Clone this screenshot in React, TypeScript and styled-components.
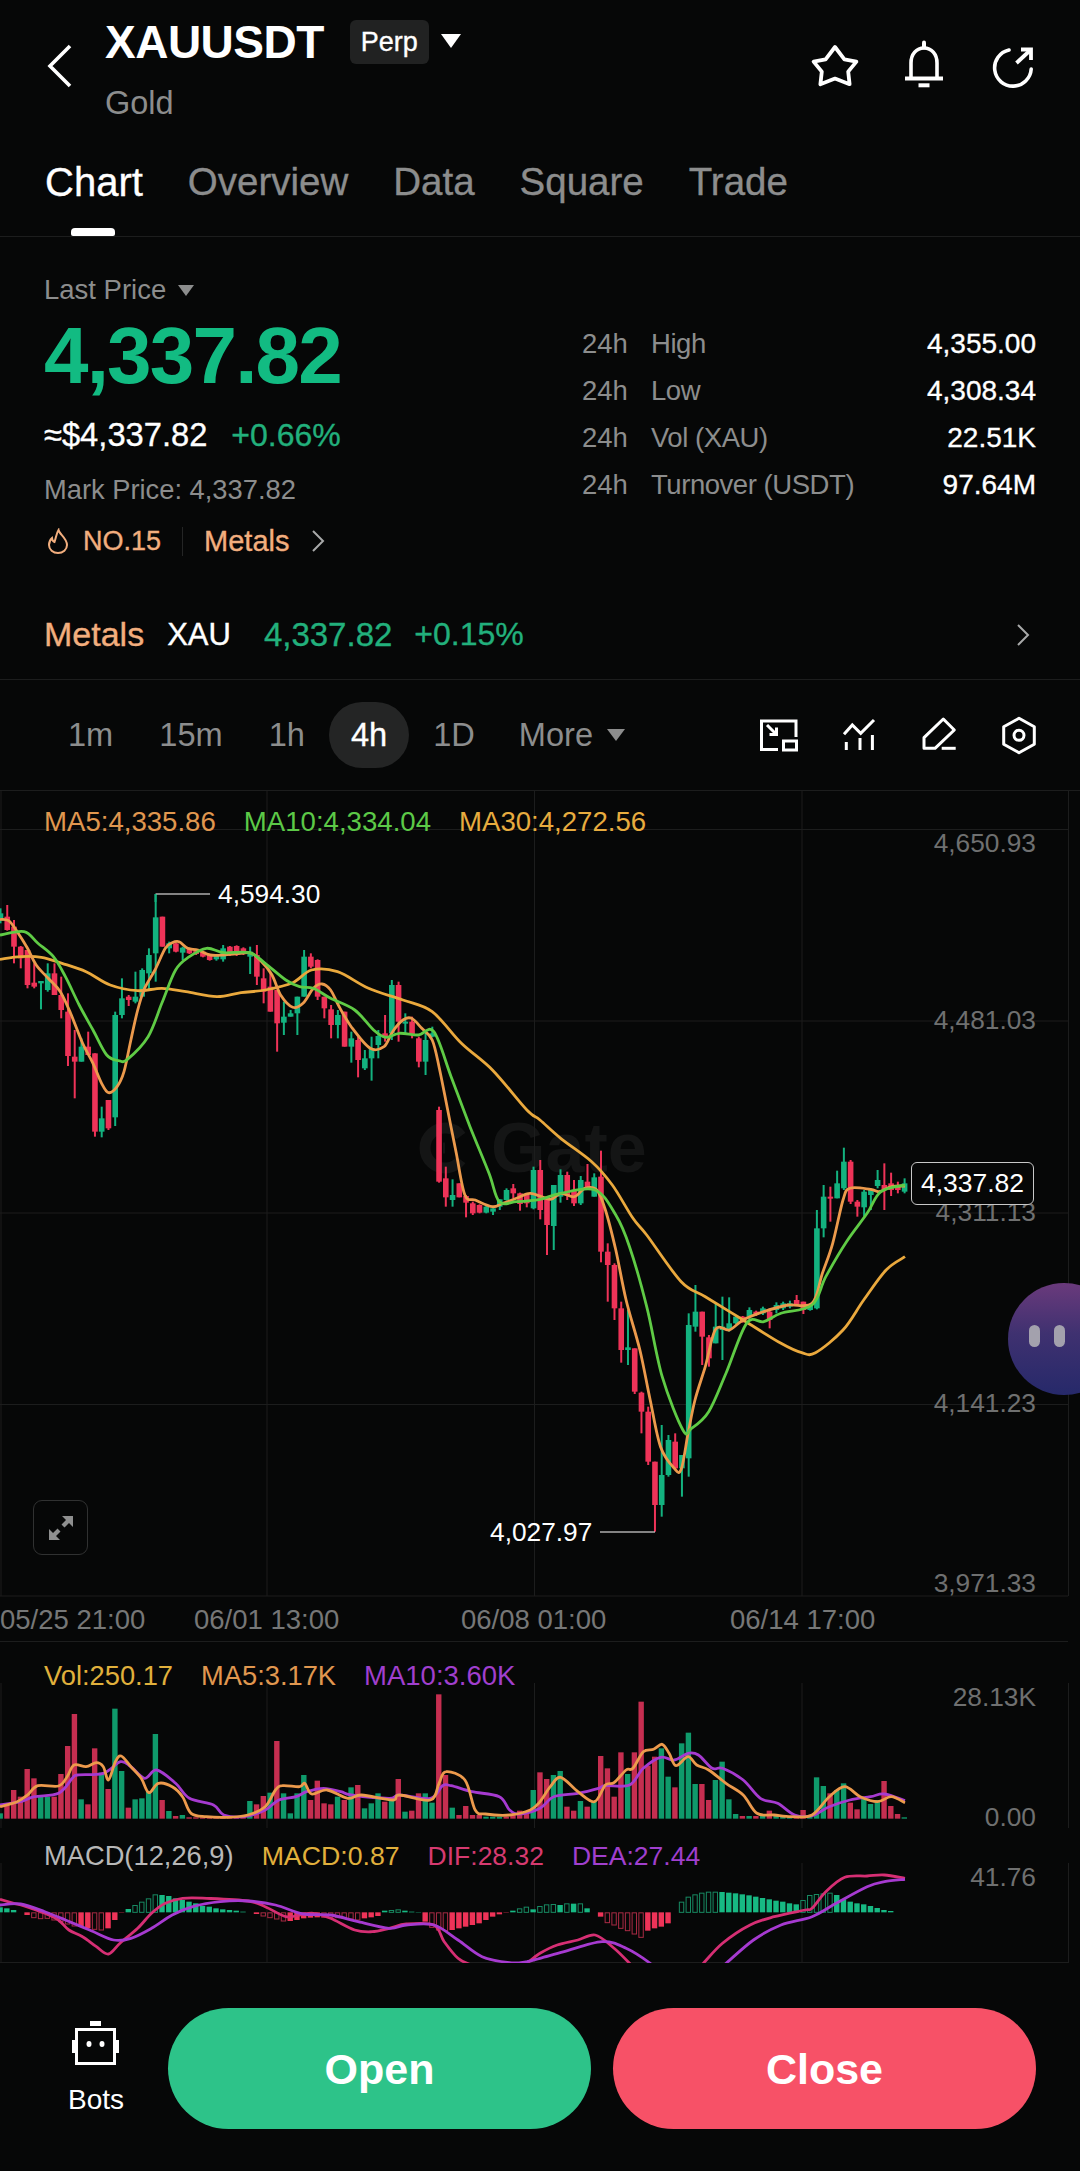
import React from "react";
import styled, { createGlobalStyle } from "styled-components";

const Global = createGlobalStyle`
  * { box-sizing: border-box; }
  html, body { margin: 0; padding: 0; background: #060707; }
  body { font-family: "Liberation Sans", Arial, sans-serif; color: #fff; }
`;

const GRAY = "#8c8d8d";
const ORANGE = "#f2ae7e";
const GREEN = "#22b07c";
const MEDIUM = "-webkit-text-stroke: 0.35px currentColor;";

const Page = styled.div`
  width: 1080px;
  height: 2171px;
  overflow: hidden;
  display: flex;
  flex-direction: column;
  position: relative;
  background: #060707;
`;

const Header = styled.header`
  height: 237px;
  border-bottom: 1px solid #1c1d1d;
`;
const TopBar = styled.div`
  height: 128px;
  display: flex;
  align-items: flex-start;
  padding: 0 39px 0 44px;
`;
const BackButton = styled.svg`
  width: 32px;
  height: 52px;
  margin-top: 40px;
  margin-right: 29px;
  flex: none;
`;
const TitleBlock = styled.div`
  flex: 1;
  padding-top: 20px;
`;
const TitleRow = styled.div`
  display: flex;
  align-items: center;
  height: 44px;
`;
const Symbol = styled.h1`
  margin: 0;
  font-size: 46px;
  line-height: 44px;
  font-weight: 700;
  letter-spacing: -0.5px;
`;
const Badge = styled.span`
  margin-left: 26px;
  width: 79px;
  height: 44px;
  border-radius: 6px;
  background: #212222;
  font-size: 27px;
  display: flex;
  align-items: center;
  justify-content: center;
  ${MEDIUM}
`;
const Caret = styled.span<{ $w: number; $h: number; $c: string }>`
  display: inline-block;
  width: 0;
  height: 0;
  border-left: ${(p) => p.$w / 2}px solid transparent;
  border-right: ${(p) => p.$w / 2}px solid transparent;
  border-top: ${(p) => p.$h}px solid ${(p) => p.$c};
`;
const TitleCaret = styled.span`
  margin-left: 12px;
  display: flex;
  margin-top: -2px;
`;
const SubTitle = styled.div`
  font-size: 32.5px;
  line-height: 36px;
  margin-top: 21px;
  color: ${GRAY};
`;
const TopActions = styled.div`
  display: flex;
  gap: 33px;
  padding-top: 37px;
`;
const TopIcon = styled.svg`
  width: 56px;
  height: 56px;
  display: block;
`;
const Tabs = styled.nav`
  height: 108px;
  display: flex;
  gap: 45px;
  padding-left: 45px;
`;
const Tab = styled.div<{ $on?: boolean }>`
  position: relative;
  font-size: ${(p) => (p.$on ? 40 : 38.5)}px;
  line-height: 108px;
  color: ${(p) => (p.$on ? "#fff" : GRAY)};
  ${MEDIUM}
  &::after {
    content: "";
    display: ${(p) => (p.$on ? "block" : "none")};
    position: absolute;
    left: 26px;
    bottom: 0;
    width: 44px;
    height: 8px;
    border-radius: 4px 4px 2px 2px;
    background: #fff;
  }
`;

const Summary = styled.section`
  height: 353px;
  display: flex;
  justify-content: space-between;
  padding: 0 44px;
`;
const PriceCol = styled.div`
  display: flex;
  flex-direction: column;
  padding-top: 35px;
`;
const LastRow = styled.div`
  display: flex;
  align-items: center;
  gap: 12px;
  height: 36px;
  font-size: 27.5px;
  color: ${GRAY};
`;
const BigPrice = styled.div`
  margin-top: 8px;
  height: 80px;
  font-size: 80px;
  line-height: 80px;
  font-weight: 700;
  letter-spacing: -1.8px;
  color: #12bb82;
`;
const UsdRow = styled.div`
  margin-top: 21px;
  height: 36px;
  display: flex;
  align-items: center;
  gap: 24px;
  font-size: 32px;
  ${MEDIUM}
`;
const UsdValue = styled.span`
  font-size: 32.7px;
`;
const Change = styled.span`
  color: ${GREEN};
`;
const MarkRow = styled.div`
  margin-top: 19px;
  height: 36px;
  line-height: 36px;
  font-size: 27.3px;
  color: ${GRAY};
`;
const RankRow = styled.div`
  margin-top: 15px;
  height: 36px;
  display: flex;
  align-items: center;
  color: ${ORANGE};
  ${MEDIUM}
`;
const Flame = styled.svg`
  width: 22px;
  height: 26px;
  margin-left: 3px;
  margin-right: 14px;
`;
const RankText = styled.span`
  font-size: 27px;
`;
const RankDivider = styled.span`
  width: 1px;
  height: 29px;
  background: #242525;
  margin: 0 21px;
`;
const RankLink = styled.span`
  font-size: 29px;
`;
const SmallChevron = styled.svg<{ $ml: number }>`
  width: 14px;
  height: 24px;
  margin-left: ${(p) => p.$ml}px;
  display: block;
`;
const StatsCol = styled.div`
  width: 454px;
  padding-top: 83px;
`;
const StatRow = styled.div`
  height: 47px;
  display: grid;
  grid-template-columns: 69px 1fr auto;
  align-items: center;
  font-size: 27.5px;
  color: ${GRAY};
`;
const StatLabel = styled.span`
  letter-spacing: -0.45px;
`;
const StatValue = styled.span`
  color: #fff;
  font-size: 28px;
  ${MEDIUM}
`;

const SectorRow = styled.section`
  height: 90px;
  border-bottom: 1px solid #1c1d1d;
  display: flex;
  align-items: center;
  padding: 0 50px 0 44px;
`;
const SectorName = styled.span`
  font-size: 34px;
  color: ${ORANGE};
  ${MEDIUM}
`;
const SectorCoin = styled.span`
  font-size: 31px;
  margin-left: 23px;
  ${MEDIUM}
`;
const SectorPrice = styled.span`
  font-size: 33px;
  margin-left: 33px;
  color: ${GREEN};
  ${MEDIUM}
`;
const SectorChange = styled.span`
  font-size: 32px;
  margin-left: 22px;
  flex: 1;
  color: ${GREEN};
  ${MEDIUM}
`;

const Toolbar = styled.section`
  height: 111px;
  border-bottom: 1px solid #1c1d1d;
  display: flex;
  align-items: center;
  justify-content: space-between;
  padding: 0 37px 0 46px;
`;
const Intervals = styled.div`
  display: flex;
  gap: 2px;
  align-items: center;
`;
const Interval = styled.div<{ $on?: boolean }>`
  height: 66px;
  padding: 0 22px;
  border-radius: 33px;
  display: flex;
  align-items: center;
  gap: 14px;
  font-size: 32.6px;
  color: ${(p) => (p.$on ? "#fff" : GRAY)};
  background: ${(p) => (p.$on ? "#242525" : "transparent")};
  ${(p) => (p.$on ? MEDIUM : "")}
`;
const MoreInterval = styled(Interval)`
  margin-left: -2px;
`;
const ToolIcons = styled.div`
  display: flex;
  gap: 32px;
`;
const ToolIcon = styled.svg`
  width: 48px;
  height: 48px;
  display: block;
`;

const ChartPane = styled.section`
  position: relative;
  height: 851px;
`;
const Canvas = styled.svg`
  position: relative;
  z-index: 1;
  display: block;
  width: 1080px;
  height: 100%;
`;
const Watermark = styled.div`
  position: absolute;
  left: 419px;
  top: 322px;
  display: flex;
  align-items: center;
  gap: 20px;
  font-size: 70px;
  line-height: 70px;
  font-weight: 700;
  color: #141515;
`;
const WatermarkLogo = styled.svg`
  width: 52px;
  height: 52px;
`;
const LegendRow = styled.div<{ $y: number }>`
  position: absolute;
  z-index: 2;
  left: 44px;
  top: ${(p) => p.$y}px;
  transform: translateY(-50%);
  display: flex;
  align-items: center;
  gap: 28px;
  line-height: 32px;
  white-space: nowrap;
`;
const LegendItem = styled.span<{ $c: string; $size: number }>`
  color: ${(p) => p.$c};
  font-size: ${(p) => p.$size}px;
`;
const AxisLabel = styled.span<{ $y: number }>`
  position: absolute;
  z-index: 2;
  right: 44px;
  top: ${(p) => p.$y}px;
  transform: translateY(-50%);
  font-size: 26.3px;
  line-height: 32px;
  color: #6f7070;
`;
const PriceTag = styled.span`
  position: absolute;
  z-index: 3;
  left: 911px;
  top: 371px;
  width: 123px;
  height: 43px;
  border: 1px solid #c8c8c8;
  border-radius: 6px;
  background: #060707;
  font-size: 26.5px;
  display: flex;
  align-items: center;
  justify-content: center;
`;
const ExtremeLabel = styled.span<{ $x: number; $y: number }>`
  position: absolute;
  z-index: 2;
  left: ${(p) => p.$x}px;
  top: ${(p) => p.$y}px;
  transform: translateY(-50%);
  font-size: 26.3px;
  line-height: 32px;
`;
const ExpandButton = styled.div`
  position: absolute;
  z-index: 2;
  left: 33px;
  top: 709px;
  width: 55px;
  height: 55px;
  border: 1.5px solid #303131;
  border-radius: 9px;
  display: flex;
  align-items: center;
  justify-content: center;
`;
const TimeLabel = styled.span<{ $x: number }>`
  position: absolute;
  z-index: 2;
  left: ${(p) => p.$x}px;
  top: 829px;
  transform: translateY(-50%);
  font-size: 27.5px;
  line-height: 32px;
  color: #767777;
`;
const Bubble = styled.div`
  position: absolute;
  z-index: 4;
  left: 1008px;
  top: 492px;
  width: 112px;
  height: 112px;
  border-radius: 50%;
  background: linear-gradient(180deg, #6a3a7c 0%, #3f3170 45%, #26296a 100%);
  display: flex;
  gap: 14px;
  padding: 42px 0 0 21px;
`;
const BubbleEye = styled.span`
  width: 11px;
  height: 22px;
  border-radius: 6px;
  background: #a3a1ad;
`;
const SubPane = styled.section<{ $h: number }>`
  position: relative;
  height: ${(p) => p.$h}px;
`;

const BottomBar = styled.footer`
  flex: 1;
  display: flex;
  align-items: flex-start;
  padding: 45px 44px 0 44px;
  gap: 20px;
`;
const BotsItem = styled.div`
  width: 104px;
  display: flex;
  flex-direction: column;
  align-items: center;
  padding-top: 8px;
`;
const BotsIcon = styled.svg`
  width: 56px;
  height: 56px;
  display: block;
`;
const BotsLabel = styled.span`
  font-size: 28px;
  line-height: 32px;
  margin-top: 12px;
`;
const Actions = styled.div`
  flex: 1;
  display: flex;
  gap: 22px;
`;
const ActionButton = styled.button<{ $c: string }>`
  flex: 1;
  height: 121px;
  padding: 2px 0 0;
  border: 0;
  border-radius: 60.5px;
  background: ${(p) => p.$c};
  color: #fff;
  font-family: inherit;
  font-size: 43px;
  font-weight: 700;
`;

/* ---------- chart data ---------- */
type Candle = [number, number, number, number, "r" | "g"];
const z4: Candle[] = [
  [340,362,325,370,"g"],[350,390,315,392,"r"],[380,440,360,490,"r"],[440,475,438,505,"r"],[450,555,450,565,"r"],
  [548,560,490,565,"r"],[543,550,543,628,"g"],[520,570,490,575,"g"],[520,585,490,585,"r"],[585,630,530,655,"r"],
  [635,768,580,798,"r"],[770,785,690,895,"r"],[740,785,715,785,"g"],[740,765,695,765,"r"],[760,995,760,1010,"r"],
  [955,995,920,1012,"g"],[900,985,900,990,"r"],[645,952,635,978,"g"],[595,645,535,655,"g"],[590,600,585,618,"r"],
  [590,605,515,610,"g"],[510,590,505,590,"g"],[465,520,445,570,"g"],[352,460,282,545,"g"],[350,440,350,440,"r"],
  [430,445,425,460,"g"],[430,455,428,457,"r"],[443,458,440,480,"g"],[445,460,443,462,"r"],[450,462,448,465,"r"],
  [455,470,452,472,"r"],[465,480,462,482,"r"],[465,478,462,482,"g"],[445,478,435,485,"g"],[440,465,438,468,"r"],
  [438,465,436,468,"r"],[445,462,442,465,"r"],[455,470,440,522,"g"],[465,530,435,555,"r"],[535,575,505,610,"r"],
  [560,635,515,635,"r"],[570,670,570,755,"r"],[650,668,605,705,"g"],[640,650,630,650,"g"],[590,640,590,705,"g"],
  [470,590,450,590,"g"],[470,500,460,505,"r"],[480,590,478,600,"r"],[590,625,590,655,"r"],[628,675,615,715,"r"],
  [645,675,630,715,"g"],[635,740,635,740,"r"],[715,740,695,788,"g"],[720,780,710,832,"r"],[775,805,750,810,"g"],
  [745,775,710,842,"g"],[708,735,690,775,"g"],[700,710,645,725,"r"],[555,700,540,720,"g"],[555,665,545,725,"r"],
  [665,670,640,700,"g"],[665,705,650,715,"r"],[715,785,710,802,"r"],[720,785,695,825,"g"],[700,710,680,712,"g"],
];
const z10: Candle[] = [
  [0,215,-10,218,"r"],[205,262,170,290,"r"],[255,270,208,290,"g"],[220,262,220,262,"r"],[258,278,255,322,"r"],
  [280,310,275,315,"r"],[285,308,283,310,"r"],[290,308,288,310,"g"],[295,305,295,315,"g"],[268,290,268,300,"g"],
  [240,270,235,272,"g"],[235,250,222,265,"r"],[250,282,248,302,"r"],[255,280,250,292,"r"],[180,295,170,298,"g"],
  [180,300,150,328,"r"],
];
const z5: Candle[] = [
  [290,375,290,465,"r"],[255,378,255,450,"g"],[225,290,208,308,"g"],[225,285,215,300,"r"],[270,310,240,318,"r"],
  [240,310,228,315,"g"],[245,270,192,270,"r"],[232,290,220,290,"g"],[230,455,152,487,"r"],[455,495,430,605,"r"],
  [495,625,490,660,"r"],[625,750,605,788,"r"],[742,750,630,795,"g"],[745,875,745,882,"r"],[878,935,875,1000,"r"],
  [935,1085,920,1095,"r"],[1085,1215,1085,1295,"r"],[1125,1215,975,1250,"g"],[1020,1125,1005,1130,"g"],[1025,1105,1000,1110,"r"],
  [1065,1105,1065,1190,"g"],[675,1075,640,1130,"g"],[635,680,555,695,"g"],[635,710,635,795,"r"],[712,775,705,800,"r"],
  [680,730,610,730,"g"],[680,690,590,780,"g"],[670,690,592,695,"g"],[650,670,648,672,"g"],[650,665,648,668,"r"],
  [630,650,622,660,"g"],[635,645,632,648,"r"],[625,640,620,645,"g"],[635,660,625,685,"r"],[615,630,607,640,"g"],
  [610,625,605,630,"g"],[610,620,602,625,"g"],[600,612,585,615,"r"],[605,630,605,642,"r"],[615,630,612,632,"g"],
  [385,625,330,628,"g"],[290,385,255,412,"g"],[290,295,260,365,"r"],[250,295,212,295,"g"],[185,265,143,270,"g"],
  [185,305,180,312,"r"],[305,320,300,350,"r"],[275,322,270,350,"g"],[270,285,265,330,"g"],[240,258,210,265,"g"],
  [255,268,190,330,"r"],[250,270,218,288,"r"],[255,270,245,280,"r"],[250,275,235,280,"g"],
];
const STEP = 6.747;
const CANDLE_RED = "#ee3358";
const CANDLE_GREEN = "#13b27f";
const candles = [
  ...z4.map((c) => ({ t: 800 + c[0] / 3, b: 800 + c[1] / 3, wt: 800 + c[2] / 3, wb: 800 + c[3] / 3, k: c[4] })),
  ...z10.map((c) => ({ t: 1110 + c[0] / 3, b: 1110 + c[1] / 3, wt: 1110 + c[2] / 3, wb: 1110 + c[3] / 3, k: c[4] })),
  ...z5.map((c) => ({ t: 1100 + c[0] / 3, b: 1100 + c[1] / 3, wt: 1100 + c[2] / 3, wb: 1100 + c[3] / 3, k: c[4] })),
];

type P = [number, number];
const smooth = (pts: P[]) => {
  let d = `M${pts[0][0].toFixed(1)} ${pts[0][1].toFixed(1)}`;
  for (let i = 0; i < pts.length - 1; i++) {
    const p0 = pts[Math.max(0, i - 1)];
    const p1 = pts[i];
    const p2 = pts[i + 1];
    const p3 = pts[Math.min(pts.length - 1, i + 2)];
    const c1x = p1[0] + (p2[0] - p0[0]) / 6;
    const c1y = p1[1] + (p2[1] - p0[1]) / 6;
    const c2x = p2[0] - (p3[0] - p1[0]) / 6;
    const c2y = p2[1] - (p3[1] - p1[1]) / 6;
    d += `C${c1x.toFixed(1)} ${c1y.toFixed(1)} ${c2x.toFixed(1)} ${c2y.toFixed(1)} ${p2[0].toFixed(1)} ${p2[1].toFixed(1)}`;
  }
  return d;
};
const map = (pts: number[][], x0: number, y0: number): P[] =>
  pts.map(([x, y]) => [x0 + x / 2.904, y0 + y / 3]);

const ma5 = smooth([
  ...map([[0,358],[25,362],[50,395],[80,445],[105,495],[140,535],[175,575],[205,640],[240,730],[270,790],[295,850],[315,878],[340,860],[360,815],[380,720],[400,630],[420,565],[450,510],[480,445],[500,428],[520,425],[545,445],[575,450],[610,465],[650,465],[700,460],[730,460],[760,485],[790,525],[815,585],[850,622],[880,610],[910,565],[935,552],[960,570],[985,620],[1020,680],[1075,745],[1115,740],[1140,695],[1170,660],[1195,655],[1225,685],[1255,720],[1275,800],[1300,930],[1325,1060],[1350,1185]], 0, 800),
  ...map([[1380,60],[1430,80],[1460,70],[1500,55],[1540,40]], 0, 1180),
  ...map([[30,298],[60,280],[100,290],[130,265],[165,270],[190,330],[220,450],[250,600],[290,750],[320,900],[350,1040],[390,1105],[410,1108],[430,1000],[450,900],[480,800],[510,688],[550,690],[590,660],[650,635],[720,615],[790,610],[820,520],[850,430],[880,300],[900,265],[960,268],[985,275],[1020,260],[1060,258]], 540, 1100),
]);
const ma10 = smooth([
  ...map([[0,405],[70,395],[110,430],[155,470],[190,530],[230,615],[270,690],[310,765],[345,782],[370,778],[430,710],[470,610],[510,510],[550,470],[600,445],[650,458],[725,458],[770,490],[830,540],[870,560],[910,565],[960,595],[1030,630],[1085,690],[1120,712],[1160,700],[1215,705],[1260,695],[1310,830],[1365,980],[1420,1120]], 0, 800),
  ...map([[1450,65],[1500,65]], 0, 1180),
  ...map([[0,298],[60,280],[160,270],[220,345],[260,440],[310,620],[355,830],[415,990],[440,985],[490,935],[540,820],[600,670],[650,665],[700,640],[790,615],[830,530],[890,425],[950,340],[990,275],[1060,255]], 540, 1100),
]);
const ma30 = smooth([
  ...map([[0,478],[60,470],[120,472],[180,490],[250,515],[320,555],[400,572],[470,565],[540,575],[630,590],[700,578],[770,570],[850,548],[905,510],[980,515],[1070,565],[1170,600],[1255,635],[1340,730],[1430,810],[1530,930]], 0, 800),
  ...map([[0,60],[60,115],[150,185],[210,255],[270,355],[310,405],[410,545],[480,590],[590,660],[700,730],[760,758],[800,758],[880,690],[940,600],[1005,510],[1060,470]], 540, 1100),
]);

const volTops = [
  580,555,510,530,447,475,525,530,530,462,378,282,538,553,385,458,507,266,453,563,538,535,515,342,540,573,588,585,592,592,592,592,592,592,592,592,590,543,553,528,518,363,520,580,520,465,540,482,550,553,530,540,502,495,565,550,520,545,540,477,575,572,520,520,548,223,465,563,585,558,585,585,590,590,590,590,585,572,578,510,
  457,477,465,453,560,572,543,560,545,408,445,530,397,462,397,245,437,410,385,470,502,370,338,492,492,540,480,425,538,582,588,588,588,588,572,585,588,590,590,570,585,472,498,520,510,490,548,568,535,552,540,483,558,582,592,
];
const greenVol = new Set([0,6,7,12,15,17,18,20,21,22,23,25,27,37,40,42,43,44,45,50,52,54,55,56,58,60,63,64,67,72,73,74,79,82,83,86,88,93,98,99,101,102,103,106,107,108,109,111,113,115,116,117,120,121,122,124,125,128,129,130,134]);

const volMa5 = smooth([
  ...map([[0,560],[50,545],[80,525],[110,497],[170,498],[195,470],[215,435],[250,440],[280,428],[300,440],[315,480],[335,425],[352,408],[380,440],[410,475],[432,518],[460,490],[500,500],[530,530],[555,580],[600,590],[660,592],[720,585],[770,560],[800,510],[820,497],[870,500],[885,490],[905,522],[950,510],[1010,535],[1050,525],[1140,540],[1160,525],[1250,540],[1275,490],[1295,455],[1350,480],[1380,570],[1410,582],[1480,585],[1540,570]], 0, 1620),
  ...map([[0,545],[30,500],[60,472],[110,515],[158,545],[190,495],[215,488],[250,450],[270,445],[300,395],[330,388],[355,373],[375,400],[395,437],[430,410],[455,435],[490,450],[540,490],[590,525],[630,580],[680,585],[730,590],[790,585],[840,530],[885,500],[930,530],[980,545],[1020,530],[1060,548]], 540, 1620),
]);
const volMa10 = smooth([
  ...map([[0,555],[60,545],[100,530],[170,520],[210,475],[225,465],[300,460],[350,425],[380,440],[420,475],[455,450],[510,490],[550,535],[620,555],[650,585],[710,590],[770,570],[810,540],[860,530],[890,515],[940,505],[990,515],[1020,525],[1130,535],[1160,525],[1250,535],[1285,497],[1310,497],[1370,515],[1450,530],[1480,570],[1510,582]], 0, 1620),
  ...map([[0,565],[40,530],[110,520],[170,505],[190,497],[260,495],[300,445],[350,412],[390,420],[430,400],[460,405],[500,445],[530,445],[590,480],[640,535],[690,550],[740,585],[790,587],[840,560],[900,540],[960,530],[1000,522],[1060,542]], 540, 1620),
]);

type Hist = number | [number];
const hist: Hist[] = [
  862,865,870,877,885,[893],[896],[895],[900],[905],[912],[918],920,925,[928],[930],925,900,878,
  867,[855],[845],[835],[823],825,828,835,840,845,850,858,860,865,868,870,872,875,877,
  882,[888],[893],[897],[903],903,900,895,893,892,[892],[892],[893],[895],[897],[900],895,892,888,
  872,[870],[868],872,875,876,905,[922],[930],[932],930,925,920,915,910,900,890,883,878,872,[865],
  [860],868,[858],[853],[852],855,[850],851,[850],865,877,890,[908],[915],[925],[932],[942],[952],932,925,920,910,877,
  [845],[830],[823],[818],[815],[815],816,818,820,823,826,830,834,838,842,845,850,853,[840],[825],[822],[820],[818],
  825,838,845,850,853,858,864,870,873,
];

const dif = smooth([
  ...map([[0,838],[40,850],[70,858],[130,880],[170,900],[200,930],[240,950],[280,980],[315,1002],[350,968],[400,925],[440,880],[480,850],[530,835],[600,835],[720,843],[770,860],[830,890],[870,885],[910,880],[960,895],[1030,930],[1080,935],[1130,925],[1180,912],[1260,915],[1290,965],[1330,1015],[1370,1035],[1440,1060],[1500,1050],[1530,1030]], 0, 1620),
  ...map([[0,1000],[50,975],[110,960],[160,945],[210,980],[260,1030],[310,1090],[420,1090],[470,1035],[530,970],[610,915],[680,890],[770,870],[790,865],[830,815],[885,772],[950,768],[1000,765],[1060,775]], 540, 1620),
]);
const dea = smooth([
  ...map([[0,855],[60,852],[130,875],[190,900],[260,930],[330,960],[380,955],[440,925],[500,885],[560,860],[640,845],[720,843],[800,855],[880,882],[960,885],[1040,905],[1130,925],[1180,915],[1260,915],[1330,960],[1400,1010],[1480,1028],[1530,1025]], 0, 1620),
  ...map([[0,1015],[70,995],[180,965],[250,985],[320,1030],[380,1085],[480,1085],[535,1035],[620,960],[700,915],[790,890],[860,850],[950,800],[1000,785],[1060,778]], 540, 1620),
]);

const GRID = "#1c1d1d";
const VX = [1, 267, 534.5, 802, 1068.5];

const stats = [
  ["High", "4,355.00"],
  ["Low", "4,308.34"],
  ["Vol (XAU)", "22.51K"],
  ["Turnover (USDT)", "97.64M"],
];

export default function App() {
  return (
    <Page>
      <Global />
      <Header>
        <TopBar>
          <BackButton viewBox="0 0 32 52" fill="none" stroke="#fff" strokeWidth="3.6">
            <path d="M26 6 6 26l20 20" />
          </BackButton>
          <TitleBlock>
            <TitleRow>
              <Symbol>XAUUSDT</Symbol>
              <Badge>Perp</Badge>
              <TitleCaret>
                <Caret $w={21} $h={14} $c="#fff" />
              </TitleCaret>
            </TitleRow>
            <SubTitle>Gold</SubTitle>
          </TitleBlock>
          <TopActions>
            <TopIcon viewBox="0 0 56 56" fill="none" stroke="#fff" strokeWidth="3.8" strokeLinejoin="round">
              <path d="M28 10l9.4 12.4 12 2.2-8.2 10 1.4 12.6L28 41.6 13.4 47.2l1.4-12.6-8.2-10 12-2.2z" />
            </TopIcon>
            <TopIcon viewBox="0 0 56 56" fill="none" stroke="#fff" strokeWidth="3.6">
              <path d="M15 41V26c0-9 5.5-15 13-15s13 6 13 15v15" />
              <path d="M9 41.5h38" strokeWidth="4" />
              <path d="M28 5.5v5" strokeWidth="4" strokeLinecap="round" />
              <path d="M22.5 48.3h11" strokeWidth="4" />
            </TopIcon>
            <TopIcon viewBox="0 0 56 56" fill="none" stroke="#fff" strokeWidth="3.6" strokeLinecap="round">
              <path d="M24 13A18.3 18.3 0 1 0 46.2 32" />
              <path d="M31.5 26 45.5 13" strokeLinecap="butt" strokeWidth="3.8" />
              <path d="M36 12.5h10v10.5" strokeLinecap="butt" strokeWidth="3.8" />
            </TopIcon>
          </TopActions>
        </TopBar>
        <Tabs>
          <Tab $on>Chart</Tab>
          <Tab>Overview</Tab>
          <Tab>Data</Tab>
          <Tab>Square</Tab>
          <Tab>Trade</Tab>
        </Tabs>
      </Header>

      <Summary>
        <PriceCol>
          <LastRow>
            Last Price
            <Caret $w={17} $h={11} $c={GRAY} />
          </LastRow>
          <BigPrice>4,337.82</BigPrice>
          <UsdRow>
            <UsdValue>≈$4,337.82</UsdValue>
            <Change>+0.66%</Change>
          </UsdRow>
          <MarkRow>Mark Price: 4,337.82</MarkRow>
          <RankRow>
            <Flame viewBox="0 0 22 26" fill="none" stroke={ORANGE} strokeWidth="2">
              <path d="M11.5 2c.6 4 8.5 8 8.5 15a9 8 0 0 1-18 0c0-3 1.2-5.4 3-7 .2 2 1 3.5 2.5 4C9 10 9.5 5 11.5 2z" />
            </Flame>
            <RankText>NO.15</RankText>
            <RankDivider />
            <RankLink>Metals</RankLink>
            <SmallChevron $ml={22} viewBox="0 0 14 24" fill="none" stroke="#a8a9a9" strokeWidth="2">
              <path d="M2 2l10 10L2 22" />
            </SmallChevron>
          </RankRow>
        </PriceCol>
        <StatsCol>
          {stats.map(([k, v]) => (
            <StatRow key={k}>
              <span>24h</span>
              <StatLabel>{k}</StatLabel>
              <StatValue>{v}</StatValue>
            </StatRow>
          ))}
        </StatsCol>
      </Summary>

      <SectorRow>
        <SectorName>Metals</SectorName>
        <SectorCoin>XAU</SectorCoin>
        <SectorPrice>4,337.82</SectorPrice>
        <SectorChange>+0.15%</SectorChange>
        <SmallChevron $ml={0} viewBox="0 0 14 24" fill="none" stroke="#a8a9a9" strokeWidth="2">
          <path d="M2 2l10 10L2 22" />
        </SmallChevron>
      </SectorRow>

      <Toolbar>
        <Intervals>
          <Interval>1m</Interval>
          <Interval>15m</Interval>
          <Interval>1h</Interval>
          <Interval $on>4h</Interval>
          <Interval>1D</Interval>
          <MoreInterval>
            More
            <Caret $w={18} $h={12} $c={GRAY} />
          </MoreInterval>
        </Intervals>
        <ToolIcons>
          <ToolIcon viewBox="0 0 48 48" fill="none" stroke="#fff" strokeWidth="3">
            <path d="M41 26V10H6.5v28.5H23" />
            <rect x="28.5" y="30" width="13" height="9" />
            <path d="M12 14l9.5 9.5" />
            <path d="M21.5 16.5v7h-7" />
          </ToolIcon>
          <ToolIcon viewBox="0 0 48 48" fill="none" stroke="#fff" strokeWidth="3">
            <path d="M9 23.3 17.3 14l8.4 8.3L39 9" />
            <path d="M11.3 31v8M25 27v12M37.4 24v15" />
          </ToolIcon>
          <ToolIcon viewBox="0 0 48 48" fill="none" stroke="#fff" strokeWidth="3" strokeLinejoin="round">
            <path d="M28.3 8l11 11L20 37.3H9V26.7z" />
            <path d="M26.7 37.3h14" />
          </ToolIcon>
          <ToolIcon viewBox="0 0 48 48" fill="none" stroke="#fff" strokeWidth="3" strokeLinejoin="round">
            <path d="M24 7.3l15.3 8.4v17.6L24 41.7 8.7 33.3V15.7z" />
            <circle cx="24" cy="24.3" r="5" />
          </ToolIcon>
        </ToolIcons>
      </Toolbar>

      <ChartPane>
        <Watermark>
          <WatermarkLogo viewBox="0 0 52 52" fill="none" stroke="#141515" strokeWidth="11">
            <path d="M42 14A20 20 0 1 0 42 38" />
            <path d="M26 26h-2" />
          </WatermarkLogo>
          Gate
        </Watermark>
        <Canvas viewBox="0 791 1080 851" fill="none">
          {VX.map((x) => (
            <path key={x} d={`M${x} 791V1596`} stroke={GRID} strokeWidth="1" />
          ))}
          {[829.5, 1021, 1213, 1404.5, 1596].map((y) => (
            <path key={y} d={`M0 ${y}H1068`} stroke={GRID} strokeWidth="1" />
          ))}
          <path d="M0 1641.5H1068" stroke={GRID} strokeWidth="1" />
          {candles.map((c, i) => {
            const x = i * STEP + 0.5;
            const col = c.k === "r" ? CANDLE_RED : CANDLE_GREEN;
            return (
              <g key={i} fill={col}>
                <rect x={x - 1} y={c.wt} width={2} height={Math.max(c.wb - c.wt, 1)} />
                <rect x={x - 2.8} y={c.t} width={5.6} height={Math.max(c.b - c.t, 2)} />
              </g>
            );
          })}
          <path d="M155.5 894H210" stroke="#fff" strokeWidth="1.2" />
          <path d="M155.5 894V902" stroke={CANDLE_GREEN} strokeWidth="2" />
          <path d="M600 1532H655" stroke="#fff" strokeWidth="1.2" />
          <path d={ma30} stroke="#eaa93d" strokeWidth="2.8" />
          <path d={ma5} stroke="#ec9a4c" strokeWidth="2.8" />
          <path d={ma10} stroke="#5fcb45" strokeWidth="2.8" />
        </Canvas>
        <LegendRow $y={31}>
          <LegendItem $size={27.6} $c="#e0974f">MA5:4,335.86</LegendItem>
          <LegendItem $size={27.6} $c="#5cc947">MA10:4,334.04</LegendItem>
          <LegendItem $size={27.6} $c="#e7ac3f">MA30:4,272.56</LegendItem>
        </LegendRow>
        <AxisLabel $y={52}>4,650.93</AxisLabel>
        <AxisLabel $y={229}>4,481.03</AxisLabel>
        <AxisLabel $y={421}>4,311.13</AxisLabel>
        <AxisLabel $y={612}>4,141.23</AxisLabel>
        <AxisLabel $y={792}>3,971.33</AxisLabel>
        <PriceTag>4,337.82</PriceTag>
        <ExtremeLabel $x={218} $y={103}>4,594.30</ExtremeLabel>
        <ExtremeLabel $x={490} $y={741}>4,027.97</ExtremeLabel>
        <ExpandButton>
          <svg width="28" height="28" viewBox="0 0 28 28" fill="#8e8f8f">
            <path d="M15 2h11v11l-4-4-4.5 4.5-3-3L19 6z" />
            <path d="M13 26H2V15l4 4 4.5-4.5 3 3L9 22z" />
          </svg>
        </ExpandButton>
        <TimeLabel $x={0}>05/25 21:00</TimeLabel>
        <TimeLabel $x={194}>06/01 13:00</TimeLabel>
        <TimeLabel $x={461}>06/08 01:00</TimeLabel>
        <TimeLabel $x={730}>06/14 17:00</TimeLabel>
        <Bubble>
          <BubbleEye />
          <BubbleEye />
        </Bubble>
      </ChartPane>

      <SubPane $h={186}>
        <Canvas viewBox="0 1642 1080 186" fill="none">
          {VX.map((x) => (
            <path key={x} d={`M${x} 1683V1828`} stroke={GRID} strokeWidth="1" />
          ))}
          {volTops.map((z, i) => {
            const top = 1620 + z / 3;
            const bottom = 1620 + 596 / 3;
            return (
              <rect
                key={i}
                x={i * STEP - 2.5}
                y={top}
                width={5.4}
                height={bottom - top}
                fill={greenVol.has(i) ? "#0f9a6b" : "#c52e50"}
              />
            );
          })}
          <path d={volMa10} stroke="#a63ad0" strokeWidth="2.8" />
          <path d={volMa5} stroke="#ec9a4c" strokeWidth="2.8" />
        </Canvas>
        <LegendRow $y={34}>
          <LegendItem $size={27.3} $c="#e0b03c">Vol:250.17</LegendItem>
          <LegendItem $size={27.3} $c="#e0974f">MA5:3.17K</LegendItem>
          <LegendItem $size={27.5} $c="#a03fce">MA10:3.60K</LegendItem>
        </LegendRow>
        <AxisLabel $y={55}>28.13K</AxisLabel>
        <AxisLabel $y={175}>0.00</AxisLabel>
      </SubPane>

      <SubPane $h={135}>
        <Canvas viewBox="0 1828 1080 135" fill="none">
          {VX.map((x) => (
            <path key={x} d={`M${x} 1863V1963`} stroke={GRID} strokeWidth="1" />
          ))}
          <path d="M0 1962.5H1068" stroke={GRID} strokeWidth="1" />
          {hist.map((h, i) => {
            const hollow = Array.isArray(h);
            const z = Array.isArray(h) ? h[0] : h;
            if (z === 877) return null;
            const up = z < 877;
            const y1 = 1620 + Math.min(z, 877) / 3;
            const y2 = 1620 + Math.max(z, 877) / 3;
            const x = i * STEP - 2.6;
            return hollow ? (
              <rect key={i} x={x + 0.5} y={y1 + 0.5} width={4.4} height={y2 - y1 - 0.5} stroke={up ? "#178a62" : "#a82a44"} />
            ) : (
              <rect key={i} x={x} y={y1} width={5.4} height={y2 - y1} fill={up ? "#17b983" : "#ef3358"} />
            );
          })}
          <path d={dif} stroke="#d62f74" strokeWidth="2.8" />
          <path d={dea} stroke="#a63ad0" strokeWidth="2.8" />
        </Canvas>
        <LegendRow $y={28}>
          <LegendItem $size={27.3} $c="#b7b8b8">MACD(12,26,9)</LegendItem>
          <LegendItem $size={26.7} $c="#e0b03c">MACD:0.87</LegendItem>
          <LegendItem $size={26.5} $c="#d63a70">DIF:28.32</LegendItem>
          <LegendItem $size={26.5} $c="#a03fce">DEA:27.44</LegendItem>
        </LegendRow>
        <AxisLabel $y={49}>41.76</AxisLabel>
      </SubPane>

      <BottomBar>
        <BotsItem>
          <BotsIcon viewBox="0 0 56 56" fill="#fff">
            <rect x="22" y="5" width="11" height="5" />
            <rect x="8.5" y="13.5" width="38" height="34" fill="none" stroke="#fff" strokeWidth="3" />
            <rect x="4" y="24" width="3" height="13" />
            <rect x="48" y="24" width="3" height="13" />
            <ellipse cx="21" cy="28" rx="2.5" ry="3" />
            <ellipse cx="34" cy="28" rx="2.5" ry="3" />
          </BotsIcon>
          <BotsLabel>Bots</BotsLabel>
        </BotsItem>
        <Actions>
          <ActionButton $c="#2dc389">Open</ActionButton>
          <ActionButton $c="#f75167">Close</ActionButton>
        </Actions>
      </BottomBar>
    </Page>
  );
}
